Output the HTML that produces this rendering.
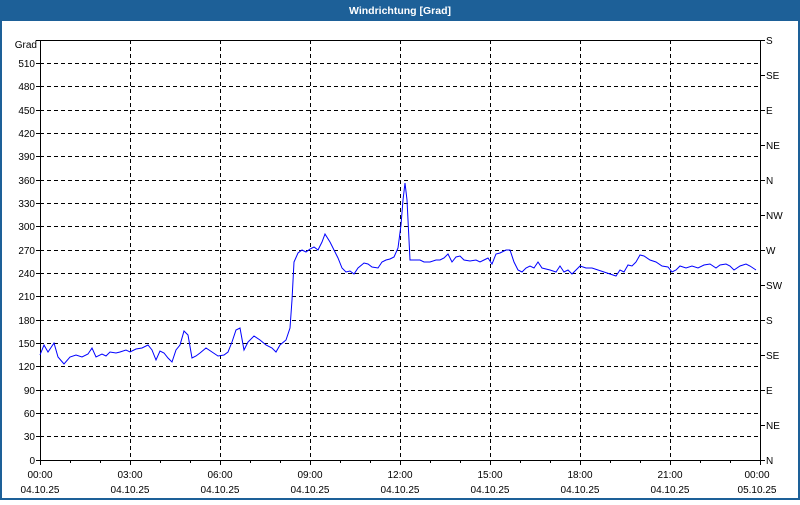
<!DOCTYPE html>
<html><head><meta charset="utf-8"><style>
body{margin:0;width:800px;height:500px;overflow:hidden;background:#fff;font-family:"Liberation Sans",sans-serif}
</style></head><body>
<svg width="800" height="500" xmlns="http://www.w3.org/2000/svg" font-family="Liberation Sans, sans-serif" font-size="10" shape-rendering="crispEdges">
<rect x="0" y="0" width="800" height="500" fill="#fff"/>
<rect x="0" y="0" width="800" height="21" fill="#1d6098"/>
<rect x="0" y="0" width="2" height="500" fill="#1d6098"/>
<rect x="798" y="0" width="2" height="500" fill="#1d6098"/>
<rect x="0" y="498" width="800" height="2" fill="#1d6098"/>
<text x="400" y="14" fill="#fff" font-weight="bold" font-size="10.5" text-anchor="middle">Windrichtung [Grad]</text>
<g stroke="#000" stroke-dasharray="4,3" stroke-width="1">
<line x1="40" x2="760" y1="63.5" y2="63.5"/><line x1="40" x2="760" y1="86.5" y2="86.5"/><line x1="40" x2="760" y1="110.5" y2="110.5"/><line x1="40" x2="760" y1="133.5" y2="133.5"/><line x1="40" x2="760" y1="156.5" y2="156.5"/><line x1="40" x2="760" y1="180.5" y2="180.5"/><line x1="40" x2="760" y1="203.5" y2="203.5"/><line x1="40" x2="760" y1="226.5" y2="226.5"/><line x1="40" x2="760" y1="250.5" y2="250.5"/><line x1="40" x2="760" y1="273.5" y2="273.5"/><line x1="40" x2="760" y1="296.5" y2="296.5"/><line x1="40" x2="760" y1="320.5" y2="320.5"/><line x1="40" x2="760" y1="343.5" y2="343.5"/><line x1="40" x2="760" y1="366.5" y2="366.5"/><line x1="40" x2="760" y1="390.5" y2="390.5"/><line x1="40" x2="760" y1="413.5" y2="413.5"/><line x1="40" x2="760" y1="436.5" y2="436.5"/>
<line x1="130.5" x2="130.5" y1="40" y2="460"/><line x1="220.5" x2="220.5" y1="40" y2="460"/><line x1="310.5" x2="310.5" y1="40" y2="460"/><line x1="400.5" x2="400.5" y1="40" y2="460"/><line x1="490.5" x2="490.5" y1="40" y2="460"/><line x1="580.5" x2="580.5" y1="40" y2="460"/><line x1="670.5" x2="670.5" y1="40" y2="460"/>
</g>
<rect x="40.5" y="40.5" width="720" height="420" fill="none" stroke="#000"/>
<g stroke="#000">
<path d="M36 40.5h4M36 63.5h4M36 86.5h4M36 110.5h4M36 133.5h4M36 156.5h4M36 180.5h4M36 203.5h4M36 226.5h4M36 250.5h4M36 273.5h4M36 296.5h4M36 320.5h4M36 343.5h4M36 366.5h4M36 390.5h4M36 413.5h4M36 436.5h4M36 460.5h4"/>
<path d="M760 40.5h5M760 75.5h5M760 110.5h5M760 145.5h5M760 180.5h5M760 215.5h5M760 250.5h5M760 285.5h5M760 320.5h5M760 355.5h5M760 390.5h5M760 425.5h5M760 460.5h5"/>
<path d="M40.5 460v5M70.5 460v3M100.5 460v3M130.5 460v5M160.5 460v3M190.5 460v3M220.5 460v5M250.5 460v3M280.5 460v3M310.5 460v5M340.5 460v3M370.5 460v3M400.5 460v5M430.5 460v3M460.5 460v3M490.5 460v5M520.5 460v3M550.5 460v3M580.5 460v5M610.5 460v3M640.5 460v3M670.5 460v5M700.5 460v3M730.5 460v3M760.5 460v5"/>
</g>
<g text-anchor="end" fill="#000">
<text x="37" y="48">Grad</text><text x="35" y="67">510</text><text x="35" y="90">480</text><text x="35" y="114">450</text><text x="35" y="137">420</text><text x="35" y="160">390</text><text x="35" y="184">360</text><text x="35" y="207">330</text><text x="35" y="230">300</text><text x="35" y="254">270</text><text x="35" y="277">240</text><text x="35" y="300">210</text><text x="35" y="324">180</text><text x="35" y="347">150</text><text x="35" y="370">120</text><text x="35" y="394">90</text><text x="35" y="417">60</text><text x="35" y="440">30</text><text x="35" y="464">0</text>
</g>
<g fill="#000">
<text x="766" y="44">S</text><text x="766" y="79">SE</text><text x="766" y="114">E</text><text x="766" y="149">NE</text><text x="766" y="184">N</text><text x="766" y="219">NW</text><text x="766" y="254">W</text><text x="766" y="289">SW</text><text x="766" y="324">S</text><text x="766" y="359">SE</text><text x="766" y="394">E</text><text x="766" y="429">NE</text><text x="766" y="464">N</text>
</g>
<g text-anchor="middle" fill="#000">
<text x="40" y="478">00:00</text><text x="40" y="493">04.10.25</text>
<text x="130" y="478">03:00</text><text x="130" y="493">04.10.25</text>
<text x="220" y="478">06:00</text><text x="220" y="493">04.10.25</text>
<text x="310" y="478">09:00</text><text x="310" y="493">04.10.25</text>
<text x="400" y="478">12:00</text><text x="400" y="493">04.10.25</text>
<text x="490" y="478">15:00</text><text x="490" y="493">04.10.25</text>
<text x="580" y="478">18:00</text><text x="580" y="493">04.10.25</text>
<text x="670" y="478">21:00</text><text x="670" y="493">04.10.25</text>
<text x="757" y="478">00:00</text><text x="757" y="493">05.10.25</text>
</g>
<polyline fill="none" stroke="#0000ff" stroke-width="1" shape-rendering="auto" points="40,355 44,345 48,352 54,343 58,357 64,364 70,357 76,355 82,357 88,354 92,348 96,357 102,354 106,356 110,352 116,353 120,352 126,350 130,352 136,349 142,348 148,345 152,350 156,360 160,351 164,353 168,358 172,362 176,350 180,345 184,331 188,335 192,358 196,356 200,353 206,348 212,352 218,356 224,355 228,352 232,342 236,330 240,328 244,350 248,342 254,336 260,340 266,345 272,348 276,352 280,345 286,340 290,328 292,300 294,262 298,253 302,250 306,252 310,249 314,247 318,250 322,242 325,234 330,242 334,250 338,258 342,268 346,272 350,271 354,274 358,268 364,263 368,264 372,267 378,268 382,262 386,260 390,259 394,257 398,248 401,225 403,200 405,183 407,200 409,240 410,260 414,260 420,260 424,262 430,262 436,260 440,260 444,258 448,254 452,262 456,257 460,256 464,260 470,261 476,260 480,262 484,260 488,258 492,264 496,254 500,253 506,250 510,250 514,262 518,270 522,272 526,268 530,266 534,268 538,262 542,268 546,269 550,270 556,272 560,266 564,272 568,270 572,274 576,270 580,266 586,268 592,268 598,270 604,272 610,274 616,276 620,270 624,272 628,265 632,266 636,262 640,255 644,256 650,260 656,262 662,266 668,267 672,272 676,270 680,266 686,268 692,266 698,268 704,265 710,264 716,268 720,265 726,264 730,266 734,270 740,266 746,264 750,266 756,270"/>
</svg>
</body></html>
